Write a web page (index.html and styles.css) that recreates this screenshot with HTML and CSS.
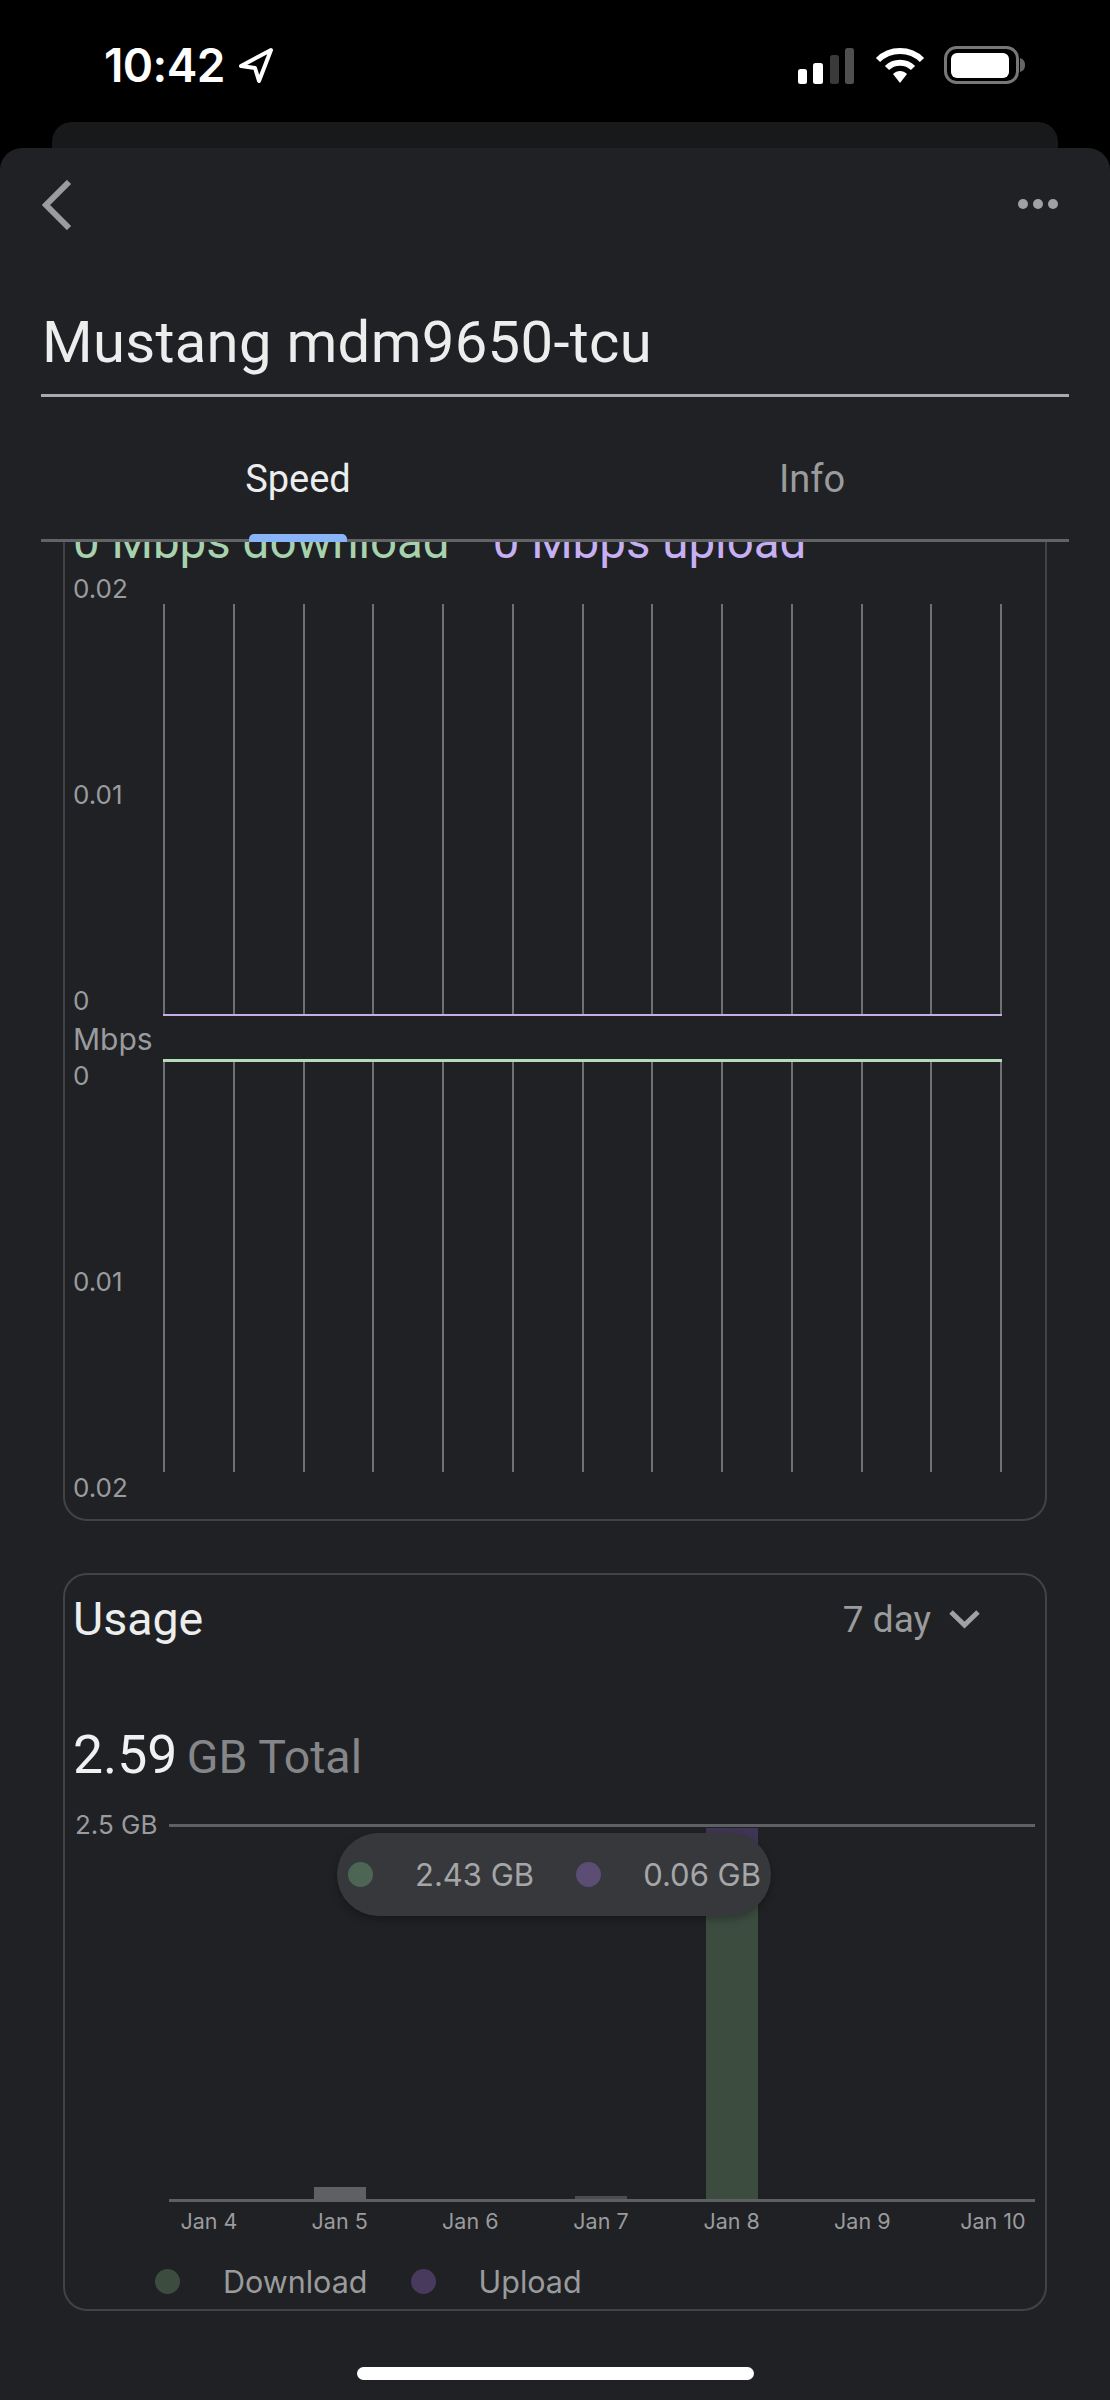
FILE: index.html
```html
<!DOCTYPE html>
<html lang="en">
<head>
    <meta charset="UTF-8">
    <meta name="viewport" content="width=device-width, initial-scale=1">
    <title>Mustang mdm9650-tcu</title>
    <link rel="stylesheet" href="styles.css">
</head>
<body>

    <!-- status bar -->
    <div class="status-bar">
        <div class="status-left">
            <span class="clock">10:42</span>
            <svg class="loc-arrow" width="37" height="37" viewBox="0 0 37 37"><path d="M33 3 L3 19 L17 21 L21 34 Z" fill="none" stroke="#fff" stroke-width="4" stroke-linejoin="round"/></svg>
        </div>
        <div class="status-right">
            <svg width="56" height="36" viewBox="0 0 56 36">
                <rect x="0" y="21" width="9" height="15" rx="2.5" fill="#fff"/>
                <rect x="15" y="15" width="10" height="21" rx="2.5" fill="#fff"/>
                <rect x="32" y="7" width="9" height="29" rx="2.5" fill="#3a3a3a"/>
                <rect x="47" y="0" width="9" height="36" rx="2.5" fill="#4f4f4f"/>
            </svg>
            <svg class="wifi" width="50" height="37" viewBox="0 0 50 37">
                <path d="M3 13 C15 1 35 1 47 13" fill="none" stroke="#fff" stroke-width="6"/>
                <path d="M12 21 C19 14 31 14 38 21" fill="none" stroke="#fff" stroke-width="6"/>
                <path d="M18 27 C22 23 28 23 32 27 L25 36 Z" fill="#fff"/>
            </svg>
            <svg class="battery" width="81" height="38" viewBox="0 0 81 38">
                <rect x="1.5" y="1.5" width="72" height="35" rx="11" fill="none" stroke="#777" stroke-width="3"/>
                <rect x="7" y="7" width="58" height="25" rx="6" fill="#fff"/>
                <path d="M76 12 C79 13 81 15 81 19 C81 23 79 25 76 26 Z" fill="#666"/>
            </svg>
        </div>
    </div>

    <div class="sheet-back"></div>

    <div class="sheet">
        <div class="top-nav">
            <svg width="30" height="50" viewBox="0 0 30 50"><path d="M27 2 L4 25 L27 48" fill="none" stroke="#9b9c9e" stroke-width="6"/></svg>
            <div class="more-dots"><i></i><i></i><i></i></div>
        </div>

        <h1 class="device-name">Mustang mdm9650-tcu</h1>

        <div class="tabs">
            <div class="tab active">Speed</div>
            <div class="tab">Info</div>
        </div>

        <div class="scroll-area">
            <!-- speed card, scrolled under the tabs -->
            <div class="card speed-card">
                <div class="speed-now">
                    <span class="green-text">0 Mbps download</span>
                    <span class="purple-text">0 Mbps upload</span>
                </div>
                <div class="speed-chart">
                    <div class="y-axis">
                        <div class="y-group"><span>0.02</span><span>0.01</span><span>0</span></div>
                        <div class="y-unit">Mbps</div>
                        <div class="y-group"><span>0</span><span>0.01</span><span>0.02</span></div>
                    </div>
                    <div class="plots">
                        <div class="plot plot-up">
                            <i></i><i></i><i></i><i></i><i></i><i></i><i></i><i></i><i></i><i></i><i></i><i></i><i></i>
                        </div>
                        <div class="plot plot-down">
                            <i></i><i></i><i></i><i></i><i></i><i></i><i></i><i></i><i></i><i></i><i></i><i></i><i></i>
                        </div>
                    </div>
                </div>
            </div>

            <!-- usage card -->
            <div class="card usage-card">
                <div class="usage-head">
                    <div class="usage-title">Usage</div>
                    <div class="range-picker">
                        <span>7 day</span>
                        <svg width="31" height="20" viewBox="0 0 31 20"><path d="M2 3 L15.5 16 L29 3" fill="none" stroke="#a0a1a3" stroke-width="5"/></svg>
                    </div>
                </div>
                <div class="usage-total"><b>2.59</b> <span>GB Total</span></div>

                <div class="bar-chart">
                    <div class="bar-label">2.5 GB</div>
                    <div class="bar-plot">
                        <div class="slot"></div>
                        <div class="slot"><div class="bar bar-gray-big"></div></div>
                        <div class="slot"></div>
                        <div class="slot"><div class="bar bar-gray-small"></div></div>
                        <div class="slot"><div class="bar bar-up"></div><div class="bar bar-down"></div></div>
                        <div class="slot"></div>
                        <div class="slot"></div>

                        <div class="bar-tooltip">
                            <i class="dot dot-green-light"></i><span>2.43 GB</span>
                            <i class="dot dot-purple-light"></i><span>0.06 GB</span>
                        </div>
                    </div>
                    <div class="x-axis">
                        <span>Jan 4</span><span>Jan 5</span><span>Jan 6</span><span>Jan 7</span><span>Jan 8</span><span>Jan 9</span><span>Jan 10</span>
                    </div>
                </div>

                <div class="legend">
                    <i class="dot dot-green"></i><span>Download</span>
                    <i class="dot dot-purple"></i><span>Upload</span>
                </div>
            </div>

            <div class="home-bar"></div>
        </div>
    </div>

</body>
</html>
```

FILE: styles.css
```css
* {
    box-sizing: border-box;
}
body {
    margin: 0;
    width: 1110px;
    height: 2400px;
    overflow: hidden;
    background: #000;
    font-family: Inter, "Liberation Sans", sans-serif;
    color: #a0a1a3;
}

/* status bar */
.status-bar {
    height: 122px;
    padding: 46px 85px 0 104px;
    display: flex;
    justify-content: space-between;
    align-items: flex-start;
}
.status-left {
    display: flex;
    align-items: center;
    gap: 13px;
    height: 38px;
}
.clock {
    color: #fff;
    font-size: 46px;
    font-weight: 600;
    letter-spacing: -0.6px;
    line-height: 38px;
}
.status-right {
    display: flex;
    align-items: flex-end;
    height: 38px;
}
.wifi {
    margin-left: 21px;
}
.battery {
    margin-left: 19px;
}

.sheet-back {
    height: 26px;
    margin: 0 52px;
    background: #18191b;
    border-radius: 20px 20px 0 0;
}
.sheet {
    height: 2252px;
    background: #202124;
    border-radius: 22px 22px 0 0;
    display: flex;
    flex-direction: column;
}

.top-nav {
    height: 152px;
    padding: 32px 52px 0 42px;
    display: flex;
    justify-content: space-between;
    align-items: flex-start;
}
.more-dots {
    display: flex;
    gap: 5px;
    margin-top: 19px;
}
.more-dots i {
    width: 10px;
    height: 10px;
    border-radius: 50%;
    background: #a0a1a3;
}

.device-name {
    margin: 0 41px;
    height: 97px;
    border-bottom: 3px solid #a9aaac;
    color: #eceded;
    font-family: Roboto, sans-serif;
    font-size: 58px;
    font-weight: 400;
    line-height: 50px;
    letter-spacing: 0.3px;
    padding-top: 17px;
    padding-left: 1px;
    white-space: nowrap;
}

.tabs {
    margin: 0 41px;
    height: 145px;
    display: flex;
    border-bottom: 3px solid #626366;
    position: relative;
    z-index: 2;
}
.tab {
    flex: 1;
    text-align: center;
    padding-top: 60px;
    font-family: Roboto, sans-serif;
    font-size: 38px;
    line-height: 44px;
    font-weight: 400;
    color: #9a9b9d;
    position: relative;
}
.tab.active {
    color: #eceded;
}
.tab.active::after {
    content: "";
    position: absolute;
    left: 208px;
    bottom: -3px;
    width: 98px;
    height: 8px;
    background: #8ab4f8;
    border-radius: 5px 5px 0 0;
}

.scroll-area {
    flex: 1;
    overflow: hidden;
}

.card {
    margin: 0 63px;
    border: 2px solid #424346;
    border-radius: 24px;
    padding: 0 10px 0 8px;
}
.speed-card {
    margin-top: -32px;
    height: 1011px;
}
.speed-now {
    height: 60px;
    font-family: Roboto, sans-serif;
    font-size: 47.5px;
    line-height: 60px;
    display: flex;
    gap: 43px;
    white-space: nowrap;
}
.green-text {
    color: #a6d2ad;
}
.purple-text {
    color: #c6aff2;
}

.speed-chart {
    display: flex;
}
.y-axis {
    width: 90px;
    font-size: 26px;
    color: #9a9b9d;
    line-height: 34px;
}
.y-group {
    height: 446px;
    display: flex;
    flex-direction: column;
    justify-content: space-between;
}
.y-unit {
    height: 41px;
    line-height: 38px;
    font-size: 30px;
    display: flex;
    align-items: center;
    white-space: nowrap;
}
.plots {
    width: 839px;
    padding-top: 32px;
}
.plot {
    height: 412px;
    display: flex;
    justify-content: space-between;
}
.plot i {
    width: 2px;
    background: #6f7073;
}
.plot-up {
    border-bottom: 2px solid #c3aee6;
}
.plot-down {
    height: 413px;
    margin-top: 43px;
    border-top: 3px solid #b4dcb9;
}

.usage-card {
    margin-top: 52px;
    height: 738px;
}
.usage-head {
    margin-top: 14px;
    height: 60px;
    padding-right: 55px;
    display: flex;
    justify-content: space-between;
    align-items: center;
}
.usage-title {
    font-family: Roboto, sans-serif;
    font-size: 46.5px;
    color: #eceded;
}
.range-picker {
    display: flex;
    align-items: center;
    gap: 18px;
    font-family: Roboto, sans-serif;
    font-size: 37px;
    color: #9a9b9d;
}
.usage-total {
    margin-top: 76px;
    height: 58px;
    line-height: 60px;
    font-family: Roboto, sans-serif;
    font-size: 46.5px;
    color: #85868a;
}
.usage-total b {
    font-size: 53.5px;
    font-weight: 400;
    color: #f1f1f1;
}
.usage-total span {
    margin-left: -2px;
}

.bar-chart {
    margin-top: 26px;
    display: grid;
    grid-template-columns: 96px 1fr;
}
.bar-label {
    font-size: 26px;
    line-height: 32px;
    margin-left: 2px;
    color: #9a9b9d;
    white-space: nowrap;
}
.bar-plot {
    margin-top: 15px;
    height: 378px;
    border-top: 3px solid #5f6063;
    border-bottom: 3px solid #5f6063;
    padding: 0 16px 0 14px;
    display: flex;
    justify-content: space-between;
    position: relative;
}
.slot {
    width: 52px;
    display: flex;
    flex-direction: column;
    justify-content: flex-end;
    padding-top: 1px;
}
.bar-gray-big {
    height: 12px;
    background: #5f6063;
}
.bar-gray-small {
    height: 3px;
    background: #4c4d50;
}
.bar-up {
    height: 16px;
    background: #413555;
}
.bar-down {
    flex: 1;
    background: #3c4d40;
}

.bar-tooltip {
    position: absolute;
    left: 168px;
    top: 6px;
    width: 434px;
    height: 83px;
    padding-left: 11px;
    display: flex;
    align-items: center;
    gap: 42px;
    border-radius: 42px;
    background: #37383b;
    box-shadow: 0 3px 8px rgba(0, 0, 0, 0.3);
    font-size: 31px;
    color: #a5a6a8;
    white-space: nowrap;
}

.dot {
    flex: none;
    width: 25px;
    height: 25px;
    border-radius: 50%;
}
.dot-green-light {
    background: #4d6555;
}
.dot-purple-light {
    background: #5b4d74;
}
.dot-green {
    background: #3c4d40;
}
.dot-purple {
    background: #473a5c;
}

.x-axis {
    grid-column: 2;
    margin-top: 4px;
    padding: 0 16px 0 14px;
    display: flex;
    justify-content: space-between;
    font-size: 21.5px;
    line-height: 30px;
    color: #9a9b9d;
}
.x-axis span {
    width: 52px;
    display: flex;
    justify-content: center;
    white-space: nowrap;
}

.legend {
    margin: 25px 0 0 82px;
    height: 40px;
    display: flex;
    align-items: center;
    gap: 43px;
    font-size: 30.5px;
    color: #9a9b9d;
}

.home-bar {
    width: 397px;
    height: 13px;
    margin: 56px auto 0;
    background: #fff;
    border-radius: 7px;
}
```
